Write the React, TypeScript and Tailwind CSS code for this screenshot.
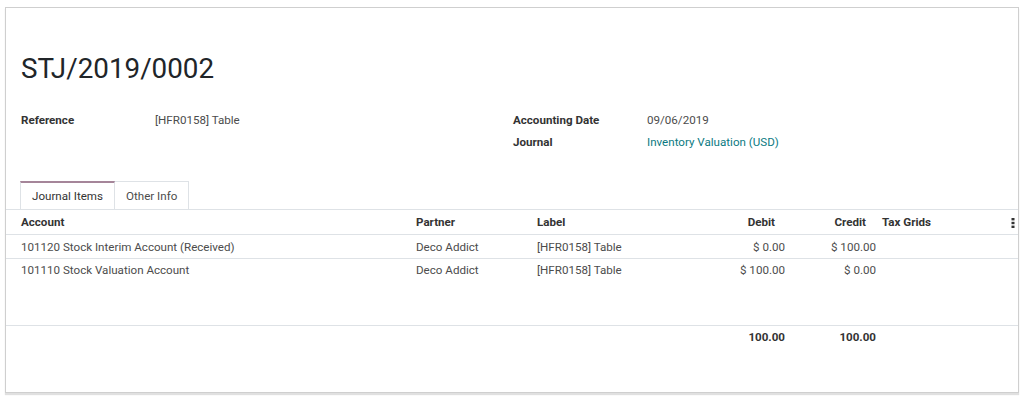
import React from "react";

const font = { fontFamily: "Roboto, 'Noto Sans', Arial, sans-serif" };

function Kebab() {
  return (
    <svg width="4" height="10" viewBox="0 0 4 10" className="block">
      <rect x="0.5" y="0" width="3" height="2.4" fill="#333" />
      <rect x="0.5" y="3.8" width="3" height="2.4" fill="#333" />
      <rect x="0.5" y="7.6" width="3" height="2.4" fill="#333" />
    </svg>
  );
}

const cols = "grid grid-cols-[410px_121px_163px_85px_91px_132px_10px]";

export default function App() {
  const rows = [
    { account: "101120 Stock Interim Account (Received)", partner: "Deco Addict", label: "[HFR0158] Table", debit: "$ 0.00", credit: "$ 100.00" },
    { account: "101110 Stock Valuation Account", partner: "Deco Addict", label: "[HFR0158] Table", debit: "$ 100.00", credit: "$ 0.00" },
  ];
  return (
    <div className="w-[1024px] h-[397px] bg-white overflow-hidden pt-[7px] pl-[5px]" style={font}>
      <div className="w-[1014px] h-[386px] border border-[#cfcfcf] bg-white shadow-[0_2px_1px_rgba(0,0,0,0.12)] text-[11.6px] text-[#4c4c4c]">
        <div className="px-[15px] pt-[47px]">
          <div className="text-[27.8px] leading-[27px] text-[#212529]">STJ/2019/0002</div>
          <div className="mt-[28px] grid grid-cols-[492px_1fr]">
            <div>
              <div className="flex h-[22px] items-center">
                <div className="w-[134px] font-bold text-[#333]">Reference</div>
                <div>[HFR0158] Table</div>
              </div>
            </div>
            <div>
              <div className="flex h-[22px] items-center">
                <div className="w-[134px] font-bold text-[#333]">Accounting Date</div>
                <div>09/06/2019</div>
              </div>
              <div className="flex h-[22px] items-center">
                <div className="w-[134px] font-bold text-[#333]">Journal</div>
                <div className="text-[#0b7a82]">Inventory Valuation (USD)</div>
              </div>
            </div>
          </div>
        </div>
        <div className="mt-[27px] border-b border-[#dee2e6] flex pl-[14px]">
          <div className="h-[28px] -mb-px px-[11px] pt-[2px] flex items-center border-t-2 border-t-[#a58599] border-x border-x-[#dee2e6] bg-white text-[#333]">
            Journal Items
          </div>
          <div className="h-[28px] px-[11px] pt-[2px] flex items-center border-t border-r border-[#dee2e6] text-[#4c4c4c]">
            Other Info
          </div>
        </div>
        <div className={`${cols} h-[25px] pt-[2px] items-center border-b border-[#dee2e6] font-bold text-[#333]`}>
          <div className="pl-[15px]">Account</div>
          <div>Partner</div>
          <div>Label</div>
          <div className="text-right pr-[10px]">Debit</div>
          <div className="text-right pr-[10px]">Credit</div>
          <div className="pl-[6px]">Tax Grids</div>
          <div className="flex justify-center"><Kebab /></div>
        </div>
        {rows.map((r, i) => (
          <div key={i} className={`${cols} ${i === 0 ? "h-[24px] pt-[2px] border-b border-[#dee2e6]" : "h-[23px]"} items-center`}>
            <div className="pl-[15px]">{r.account}</div>
            <div>{r.partner}</div>
            <div>{r.label}</div>
            <div className="text-right">{r.debit}</div>
            <div className="text-right">{r.credit}</div>
            <div></div>
            <div></div>
          </div>
        ))}
        <div className="h-[43px]"></div>
        <div className={`${cols} h-[24px] items-center border-t border-[#dee2e6] font-bold text-[#333]`}>
          <div></div>
          <div></div>
          <div></div>
          <div className="text-right">100.00</div>
          <div className="text-right">100.00</div>
          <div></div>
          <div></div>
        </div>
      </div>
    </div>
  );
}
